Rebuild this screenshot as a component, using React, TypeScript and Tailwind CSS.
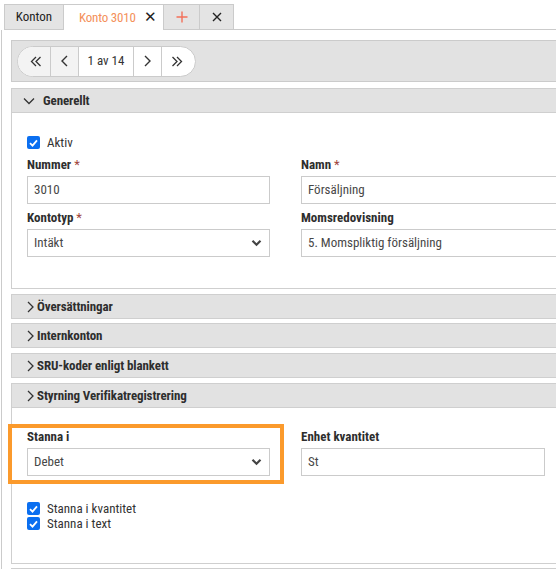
import React from "react";

const F = { fontFamily: '"Roboto Condensed", "Roboto", "Liberation Sans", sans-serif' };

function ChevDown() {
  return (
    <svg width="12" height="8" viewBox="0 0 12 8" fill="none">
      <path d="M1 1.5 L6 6.5 L11 1.5" stroke="#333" strokeWidth="1.3" />
    </svg>
  );
}
function ChevRight() {
  return (
    <svg width="7" height="12" viewBox="0 0 7 12" fill="none">
      <path d="M1 1 L6 6 L1 11" stroke="#333" strokeWidth="1.3" />
    </svg>
  );
}
function SelectChev() {
  return (
    <svg width="11" height="8" viewBox="0 0 11 8" fill="none">
      <path d="M1.5 1.8 L5.5 5.8 L9.5 1.8" stroke="#444" strokeWidth="2.2" />
    </svg>
  );
}
function Check() {
  return (
    <span className="flex h-[13px] w-[13px] items-center justify-center rounded-[2px] bg-[#0b6ff0]">
      <svg width="9" height="8" viewBox="0 0 9 8" fill="none">
        <path d="M1 4.2 L3.5 6.6 L8 1.3" stroke="#fff" strokeWidth="1.8" />
      </svg>
    </span>
  );
}

function SectionHeader({ title, open }: { title: string; open?: boolean }) {
  return (
    <div className="flex h-[25px] items-center border border-[#cfcfcf] bg-[#e2e2e2]">
      {open ? (
        <span className="ml-[11px] mr-[8px] flex w-[12px]">
          <ChevDown />
        </span>
      ) : (
        <span className="ml-[15px] mr-[3px] flex w-[7px]">
          <ChevRight />
        </span>
      )}
      <span className="text-[13px] font-bold tracking-[-0.1px] text-[#2e2e2e]">{title}</span>
    </div>
  );
}

function Label({ text, req }: { text: string; req?: boolean }) {
  return (
    <div className="h-[16px] text-[13px] font-bold leading-[16px] text-[#2e2e2e]">
      {text}
      {req && <span className="font-normal text-[#a0443c]"> *</span>}
    </div>
  );
}

function Input({ value, w, select }: { value: string; w: string; select?: boolean }) {
  return (
    <div
      className={`mt-[3px] flex h-[28px] items-center justify-between border border-[#cbcbcb] bg-white pl-[6px] pr-[7px] text-[13px] text-[#474747] ${w}`}
    >
      <span>{value}</span>
      {select && <SelectChev />}
    </div>
  );
}

function CheckRow({ text }: { text: string }) {
  return (
    <div className="flex h-[15px] items-center">
      <Check />
      <span className="ml-[7px] text-[13px] text-[#333]">{text}</span>
    </div>
  );
}

export default function App() {
  return (
    <div style={F} className="relative h-[570px] w-[556px] overflow-hidden bg-white">
      {/* tab bar */}
      <div className="flex pl-[4px] pt-[4px]">
        <div className="flex h-[26px] w-[60px] items-center justify-center border border-[#cbcbcb] bg-[#e4e4e4] text-[13px] text-[#222]">
          Konton
        </div>
        <div className="flex h-[26px] w-[100px] items-center border-t border-r border-[#cbcbcb] bg-white pl-[15px] text-[13px] tracking-[-0.2px] text-[#f4905a]">
          Konto 3010
          <span className="ml-[8px] text-[15px] leading-none text-[#222]">✕</span>
        </div>
        <div className="flex h-[26px] w-[36px] items-center justify-center border-y border-r border-[#cbcbcb] bg-[#e4e4e4]">
          <svg width="12" height="12" viewBox="0 0 12 12">
            <path d="M6 0.5 V11.5 M0.5 6 H11.5" stroke="#f3705a" strokeWidth="1.4" />
          </svg>
        </div>
        <div className="flex h-[26px] w-[34px] items-center justify-center border-y border-r border-[#cbcbcb] bg-[#e4e4e4]">
          <svg width="10" height="10" viewBox="0 0 10 10">
            <path d="M1 1 L9 9 M9 1 L1 9" stroke="#222" strokeWidth="1.4" />
          </svg>
        </div>
        <div className="flex-1 border-b border-[#cbcbcb]" />
      </div>

      {/* content */}
      <div className="ml-[1px] w-[600px] border-l border-[#cbcbcb] pl-[9px] pt-[10px]">
        {/* pager */}
        <div className="flex h-[42px] items-center border border-[#cbcbcb] bg-[#e2e2e2] pl-[5px]">
          <div className="flex h-[31px] overflow-hidden rounded-full border border-[#cbcbcb] bg-white text-[13px] text-[#333]">
            <div className="flex w-[33px] items-center justify-center border-r border-[#cbcbcb] bg-[#f3f3f3] pl-[3px]">
              <svg width="12" height="11" viewBox="0 0 12 11" fill="none">
                <path d="M6 1 L1.5 5.5 L6 10 M10.5 1 L6 5.5 L10.5 10" stroke="#333" strokeWidth="1.3" />
              </svg>
            </div>
            <div className="flex w-[28px] items-center justify-center border-r border-[#cbcbcb] bg-[#f3f3f3]">
              <svg width="7" height="12" viewBox="0 0 7 12" fill="none">
                <path d="M6 1 L1 6 L6 11" stroke="#333" strokeWidth="1.4" />
              </svg>
            </div>
            <div className="flex w-[55px] items-center justify-center border-r border-[#cbcbcb]">1 av 14</div>
            <div className="flex w-[28px] items-center justify-center border-r border-[#cbcbcb]">
              <svg width="7" height="12" viewBox="0 0 7 12" fill="none">
                <path d="M1 1 L6 6 L1 11" stroke="#333" strokeWidth="1.4" />
              </svg>
            </div>
            <div className="flex w-[33px] items-center justify-center pr-[3px]">
              <svg width="12" height="11" viewBox="0 0 12 11" fill="none">
                <path d="M1.5 1 L6 5.5 L1.5 10 M6 1 L10.5 5.5 L6 10" stroke="#333" strokeWidth="1.3" />
              </svg>
            </div>
          </div>
        </div>

        {/* Generellt */}
        <div className="mt-[6px]">
          <SectionHeader title="Generellt" open />
          <div className="h-[176px] border-x border-b border-[#cfcfcf] pl-[15px] pt-[22px]">
            <CheckRow text="Aktiv" />
            <div className="mt-[7px] flex gap-[31px]">
              <div>
                <Label text="Nummer" req />
                <Input value="3010" w="w-[243px]" />
                <div className="mt-[6px]">
                  <Label text="Kontotyp" req />
                  <Input value="Intäkt" w="w-[243px]" select />
                </div>
              </div>
              <div>
                <Label text="Namn" req />
                <Input value="Försäljning" w="w-[270px]" />
                <div className="mt-[6px]">
                  <Label text="Momsredovisning" />
                  <Input value="5. Momspliktig försäljning" w="w-[270px]" />
                </div>
              </div>
            </div>
          </div>
        </div>

        <div className="mt-[5px]">
          <SectionHeader title="Översättningar" />
        </div>
        <div className="mt-[4px]">
          <SectionHeader title="Internkonton" />
        </div>
        <div className="mt-[5px]">
          <SectionHeader title="SRU-koder enligt blankett" />
        </div>
        <div className="mt-[5px]">
          <SectionHeader title="Styrning Verifikatregistrering" />
          <div className="h-[156px] border-x border-b border-[#cfcfcf] pl-[15px] pt-[21px]">
            <div className="flex gap-[31px]">
              <div className="relative">
                <div className="pointer-events-none absolute left-[-19px] top-[-5px] h-[60px] w-[276px] border-[4px] border-[#fb9a2c]" />
                <Label text="Stanna i" />
                <Input value="Debet" w="w-[243px]" select />
              </div>
              <div>
                <Label text="Enhet kvantitet" />
                <Input value="St" w="w-[244px]" />
              </div>
            </div>
            <div className="mt-[25px] flex flex-col">
              <CheckRow text="Stanna i kvantitet" />
              <CheckRow text="Stanna i text" />
            </div>
          </div>
        </div>
        <div className="mt-[4px] border-t border-[#cfcfcf]" />
      </div>
    </div>
  );
}
